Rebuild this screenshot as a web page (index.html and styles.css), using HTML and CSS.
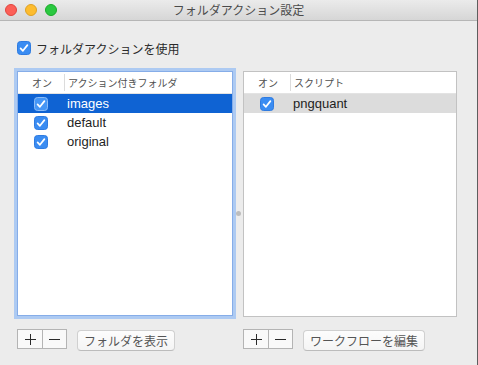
FILE: index.html
```html
<!DOCTYPE html>
<html lang="ja">
<head>
<meta charset="utf-8">
<title>フォルダアクション設定</title>
<link rel="stylesheet" href="styles.css">
</head>
<body>
<div class="window">
  <div class="titlebar">
    <div class="lights">
      <span class="light red"></span>
      <span class="light yellow"></span>
      <span class="light green"></span>
    </div>
    <div class="title">フォルダアクション設定</div>
    <div></div>
  </div>
  <div class="content">
    <label class="enable">
      <svg class="cb" width="14" height="14" viewBox="0 0 14 14"><rect x="0.5" y="0.5" width="13" height="13" rx="3" fill="#3a8cf2" stroke="#2f7be0"/><path d="M3.6 7.4 L5.9 9.8 L10.4 4.1" fill="none" stroke="#fff" stroke-width="1.7" stroke-linecap="round" stroke-linejoin="round"/></svg>
      <span>フォルダアクションを使用</span>
    </label>
    <div class="panes">
      <div class="col col-left">
        <div class="table table-focus">
          <div class="thead">
            <div class="h-on">オン</div>
            <div class="h-name">アクション付きフォルダ</div>
          </div>
          <div class="row selected">
            <div class="c-on"><svg class="cb" width="14" height="14" viewBox="0 0 14 14"><rect x="0.5" y="0.5" width="13" height="13" rx="3" fill="#4596f6" stroke="#8cbcf6"/><path d="M3.6 7.4 L5.9 9.8 L10.4 4.1" fill="none" stroke="#fff" stroke-width="1.7" stroke-linecap="round" stroke-linejoin="round"/></svg></div>
            <div class="c-name">images</div>
          </div>
          <div class="row">
            <div class="c-on"><svg class="cb" width="14" height="14" viewBox="0 0 14 14"><rect x="0.5" y="0.5" width="13" height="13" rx="3" fill="#3a8cf2" stroke="#2f7be0"/><path d="M3.6 7.4 L5.9 9.8 L10.4 4.1" fill="none" stroke="#fff" stroke-width="1.7" stroke-linecap="round" stroke-linejoin="round"/></svg></div>
            <div class="c-name">default</div>
          </div>
          <div class="row">
            <div class="c-on"><svg class="cb" width="14" height="14" viewBox="0 0 14 14"><rect x="0.5" y="0.5" width="13" height="13" rx="3" fill="#3a8cf2" stroke="#2f7be0"/><path d="M3.6 7.4 L5.9 9.8 L10.4 4.1" fill="none" stroke="#fff" stroke-width="1.7" stroke-linecap="round" stroke-linejoin="round"/></svg></div>
            <div class="c-name">original</div>
          </div>
        </div>
        <div class="buttons">
          <div class="seg">
            <span class="seg-btn"><svg width="11" height="11" viewBox="0 0 11 11"><path d="M5.5 0 V11 M0 5.5 H11" stroke="#2a2a2a" stroke-width="1"/></svg></span>
            <span class="seg-btn"><svg width="11" height="11" viewBox="0 0 11 11"><path d="M0 5.5 H11" stroke="#2a2a2a" stroke-width="1"/></svg></span>
          </div>
          <button class="btn">フォルダを表示</button>
        </div>
      </div>
      <div class="splitter"><span class="dot"></span></div>
      <div class="col col-right">
        <div class="table">
          <div class="thead">
            <div class="h-on">オン</div>
            <div class="h-name">スクリプト</div>
          </div>
          <div class="row selected-gray">
            <div class="c-on"><svg class="cb" width="14" height="14" viewBox="0 0 14 14"><rect x="0.5" y="0.5" width="13" height="13" rx="3" fill="#3a8cf2" stroke="#2f7be0"/><path d="M3.6 7.4 L5.9 9.8 L10.4 4.1" fill="none" stroke="#fff" stroke-width="1.7" stroke-linecap="round" stroke-linejoin="round"/></svg></div>
            <div class="c-name">pngquant</div>
          </div>
        </div>
        <div class="buttons">
          <div class="seg">
            <span class="seg-btn"><svg width="11" height="11" viewBox="0 0 11 11"><path d="M5.5 0 V11 M0 5.5 H11" stroke="#2a2a2a" stroke-width="1"/></svg></span>
            <span class="seg-btn"><svg width="11" height="11" viewBox="0 0 11 11"><path d="M0 5.5 H11" stroke="#2a2a2a" stroke-width="1"/></svg></span>
          </div>
          <button class="btn">ワークフローを編集</button>
        </div>
      </div>
    </div>
  </div>
</div>
</body>
</html>
```
FILE: styles.css
```css
* { box-sizing: border-box; }
html, body { margin: 0; padding: 0; }
body {
  width: 478px;
  height: 365px;
  overflow: hidden;
  background: #ececec;
  font-family: "Liberation Sans", "Noto Sans CJK JP", sans-serif;
  color: #222;
}
.window {
  width: 478px;
  height: 365px;
  background: #ececec;
  border-right: 1px solid #5e5e5e;
}
.titlebar {
  height: 21px;
  border-bottom: 1px solid #b6b6b6;
  background: linear-gradient(#ebebeb, #d6d6d6);
  display: grid;
  grid-template-columns: 1fr auto 1fr;
  align-items: center;
}
.lights {
  display: flex;
  gap: 8px;
  padding-left: 5px;
}
.light {
  width: 12px;
  height: 12px;
  border-radius: 50%;
}
.red { background: #fc5f57; border: 1px solid #e0443e; }
.yellow { background: #fdbc2e; border: 1px solid #dea123; }
.green { background: #2ac840; border: 1px solid #1aab29; }
.title {
  font-family: "Noto Sans CJK JP", sans-serif;
  font-size: 12px;
  color: #4b4b4b;
  line-height: 20px;
}
.content {
  padding: 20px 0 0 17px;
}
.enable {
  display: flex;
  align-items: center;
  gap: 5px;
  height: 14px;
  font-family: "Noto Sans CJK JP", sans-serif;
  font-size: 12px;
  color: #2a2a2a;
}
.cb { display: block; }
.panes {
  display: flex;
  margin-top: 16px;
}
.col-left { width: 216px; }
.col-right { width: 214px; }
.splitter {
  width: 10px;
  display: flex;
  justify-content: center;
}
.dot {
  margin-top: 140px;
  width: 5px;
  height: 5px;
  border-radius: 50%;
  background: #bdbdbd;
}
.table {
  height: 246px;
  background: #fff;
  border: 1px solid #c2c2c2;
}
.table-focus {
  border-color: #86ade8;
  box-shadow: 0 0 0 3px #adcaf2;
  height: 245px;
}
.thead {
  display: flex;
  align-items: center;
  height: 22px;
  border-bottom: 1px solid #e3e3e3;
  font-family: "Noto Sans CJK JP", sans-serif;
  font-size: 10px;
  color: #505050;
}
.h-on {
  width: 46px;
  padding-left: 14px;
}
.h-name {
  border-left: 1px solid #dcdcdc;
  height: 17px;
  line-height: 17px;
  padding-left: 3px;
}
.row {
  display: flex;
  align-items: center;
  height: 19px;
  font-size: 13px;
  color: #1e1e1e;
}
.row.selected {
  background: #0f63d3;
  color: #fff;
}
.row.selected-gray {
  background: #dcdcdc;
}
.c-on {
  width: 46px;
  padding-left: 16px;
}
.c-name {
  padding-left: 3px;
}
.buttons {
  display: flex;
  align-items: flex-start;
  gap: 10px;
  margin-top: 12px;
}
.col-left .buttons { margin-top: 13px; }
.seg {
  display: flex;
  height: 20px;
  border: 1px solid #b4b4b4;
  background: #f9f9f9;
}
.seg-btn {
  width: 24px;
  display: flex;
  align-items: center;
  justify-content: center;
}
.seg-btn + .seg-btn {
  width: 24px;
  border-left: 1px solid #b4b4b4;
}
.btn {
  margin-top: 1px;
  height: 21px;
  padding: 0 6px;
  border: 1px solid #d0d0d0;
  border-bottom-color: #bcbcbc;
  border-radius: 4px;
  background: linear-gradient(#fdfdfd, #f4f4f4);
  font-family: "Noto Sans CJK JP", sans-serif;
  font-size: 12px;
  color: #555;
  line-height: 19px;
}
```
